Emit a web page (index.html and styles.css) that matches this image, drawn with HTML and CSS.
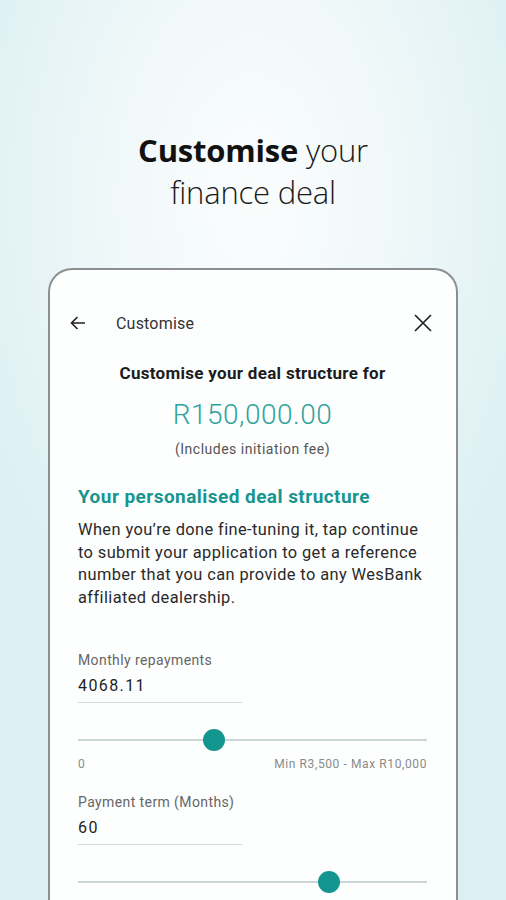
FILE: index.html
```html
<!DOCTYPE html>
<html lang="en">
<head>
    <meta charset="UTF-8">
    <meta name="viewport" content="width=device-width, initial-scale=1.0">
    <title>Customise your finance deal</title>
    <link rel="stylesheet" href="styles.css">
</head>
<body>
    <h1 class="hero"><b>Customise</b> your<br>finance deal</h1>

    <div class="phone">
        <div class="topbar">
            <svg class="back-icon" width="18" height="18" viewBox="0 0 18 18">
                <path d="M16 9H2.5M8.5 3L2.5 9l6 6" fill="none" stroke="#222" stroke-width="1.6"/>
            </svg>
            <span class="topbar-title">Customise</span>
            <svg class="close-icon" width="20" height="20" viewBox="0 0 20 20">
                <path d="M2 2l16 16M18 2L2 18" fill="none" stroke="#222" stroke-width="1.7"/>
            </svg>
        </div>

        <div class="content">
            <p class="intro">Customise your deal structure for</p>
            <p class="amount">R150,000.00</p>
            <p class="note">(Includes initiation fee)</p>

            <h2>Your personalised deal structure</h2>
            <p class="desc">When you’re done fine-tuning it, tap continue to submit your application to get a reference number that you can provide to any WesBank affiliated dealership.</p>

            <div class="field">
                <label>Monthly repayments</label>
                <div class="value">4068.11</div>
                <div class="slider">
                    <div class="track"></div>
                    <div class="thumb" style="left: 39%"></div>
                </div>
                <div class="range">
                    <span>0</span>
                    <span>Min R3,500 - Max R10,000</span>
                </div>
            </div>

            <div class="field">
                <label>Payment term (Months)</label>
                <div class="value">60</div>
                <div class="slider">
                    <div class="track"></div>
                    <div class="thumb" style="left: 72%"></div>
                </div>
            </div>
        </div>
    </div>
</body>
</html>
```

FILE: styles.css
```css
body {
    margin: 0;
    height: 900px;
    overflow: hidden;
    font-family: Roboto, "Noto Sans", sans-serif;
    background: radial-gradient(ellipse 60% 55% at 50% 22%, #fbfdfd 0%, #f0f8f9 45%, #dcf0f3 100%);
    color: #222;
}

.hero {
    margin: 0;
    padding-top: 129px;
    text-align: center;
    font-family: "Open Sans", sans-serif;
    font-size: 31px;
    line-height: 42px;
    font-weight: 300;
    color: #1a1a1a;
    letter-spacing: -0.2px;
}

.hero b {
    font-weight: 700;
    color: #111;
}

.phone {
    margin: 55px 48px 0;
    height: 700px;
    background: #fdfefe;
    border: 2px solid #8c9092;
    border-bottom: none;
    border-radius: 24px 24px 0 0;
}

.topbar {
    display: flex;
    align-items: center;
    height: 56px;
    margin-top: 25px;
    padding: 0 23px 0 19px;
}

.back-icon {
    margin-right: 29px;
}

.topbar-title {
    flex: 1;
    font-size: 16px;
    color: #333;
    letter-spacing: 0.2px;
}

.content {
    padding: 0 29px 0 28px;
    letter-spacing: 0.4px;
}

.content p {
    margin: 0;
}

.intro {
    margin-top: 11px !important;
    text-align: center;
    font-size: 17px;
    line-height: 22px;
    font-weight: 700;
    color: #1c1c1c;
    letter-spacing: 0.3px;
}

.amount {
    margin-top: 13px !important;
    text-align: center;
    font-size: 28px;
    line-height: 36px;
    font-weight: 300;
    color: #2fa39d;
    letter-spacing: 0.5px;
}

.note {
    margin-top: 6px !important;
    text-align: center;
    font-size: 14px;
    line-height: 20px;
    color: #555;
    letter-spacing: 0.5px;
}

h2 {
    margin: 25px 0 0;
    font-size: 19px;
    line-height: 26px;
    font-weight: 700;
    color: #17958f;
    letter-spacing: 0.45px;
}

.desc {
    margin-top: 9px !important;
    font-size: 16.4px;
    line-height: 22.6px;
    color: #2a2a2a;
}

.field {
    margin-top: 41px;
}

.field + .field {
    margin-top: 20px;
}

.field label {
    display: block;
    font-size: 14px;
    line-height: 20px;
    color: #666;
}

.value {
    width: 164px;
    margin-top: 5px;
    padding-bottom: 5px;
    border-bottom: 1px solid #d6dadb;
    font-size: 16px;
    line-height: 22px;
    color: #1e1e1e;
    letter-spacing: 1.4px;
}

.slider {
    position: relative;
    height: 22px;
    margin-top: 26px;
}

.track {
    position: absolute;
    top: 10px;
    left: 0;
    right: 0;
    height: 2px;
    background: #ccd6d9;
}

.thumb {
    position: absolute;
    top: 0;
    width: 22px;
    height: 22px;
    margin-left: -11px;
    border-radius: 50%;
    background: #13968f;
}

.range {
    display: flex;
    justify-content: space-between;
    margin-top: 5px;
    font-size: 12px;
    line-height: 16px;
    color: #8a8a8a;
    letter-spacing: 0.6px;
}
```
